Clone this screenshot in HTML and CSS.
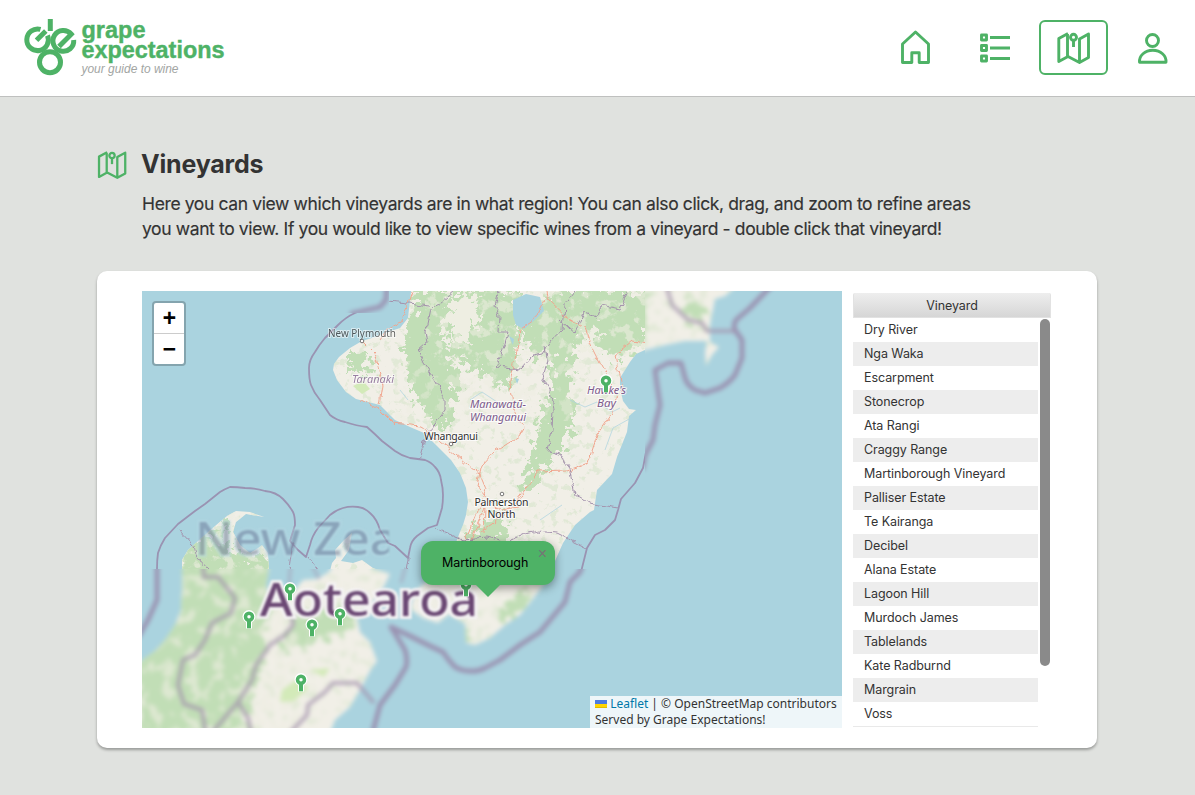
FILE: index.html
```html
<!DOCTYPE html>
<html lang="en">
<head>
<meta charset="utf-8">
<title>Grape Expectations</title>
<link rel="stylesheet" href="styles.css">
</head>
<body>
<svg class="defs" width="0" height="0" aria-hidden="true">
  <symbol id="map-icon" viewBox="0 0 34 34">
    <path d="M11.500 25.500 2.300 30.500V7.500L11.500 2.500M11 3v22.500M11.500 25.500 23 31.500l9-5V3L23 8v23"/>
    <circle cx="17" cy="6.300" r="3"/><path d="M17 9.500v6.500"/>
  </symbol>
  <symbol id="pin" viewBox="0 0 16 22">
    <path class="pin-halo" d="M8 7v12"/><circle class="pin-halo-dot" cx="8" cy="7" r="6.500"/>
    <path class="pin-stem" d="M8 8v10.700"/><circle class="pin-head" cx="8" cy="7.200" r="3.500"/>
  </symbol>
</svg>
<header class="topbar">
  <a class="logo">
    <svg width="204" height="60" viewBox="22 17 204 60">
      <g class="logo-mark">
        <path d="M40.500 29.400A10.800 10.800 0 1 0 47.500 35.500M45.800 31 36.500 40.300"/>
        <path d="M59 46.500 71.300 34.200A10.400 10.400 0 1 0 73.700 40"/>
        <circle cx="50" cy="62.200" r="10.500"/>
        <path d="M50.300 19v12"/>
      </g>
      <text class="logo-name" x="81.500" y="38" textLength="64" lengthAdjust="spacingAndGlyphs">grape</text>
      <text class="logo-name" x="81.500" y="58" textLength="143" lengthAdjust="spacingAndGlyphs">expectations</text>
      <text class="logo-tag" x="81.500" y="73" textLength="97" lengthAdjust="spacingAndGlyphs">your guide to wine</text>
    </svg>
  </a>
  <nav class="nav">
    <a class="nav-item"><svg width="34" height="36" viewBox="0.500 0.500 34 36"><path d="M4 33V14.500L17 2.500l13 12V33h-9.300V23.300h-7.400V33z"/></svg></a>
    <a class="nav-item"><svg width="34" height="34" viewBox="0 0 34 34"><path d="M3.500 4h5v5h-5zM3.500 14.500h5v5h-5zM3.500 25h5v5h-5zM12 6.500h20M12 17h20M12 27.500h20"/></svg></a>
    <a class="nav-item active"><svg width="34" height="34" viewBox="0.500 0 34 34"><use href="#map-icon" width="34" height="34"/></svg></a>
    <a class="nav-item"><svg width="34" height="34" viewBox="0.500 0 34 34"><circle cx="17" cy="9.500" r="6"/><path d="M4 31.200C3.500 24.500 9.500 19.300 17.300 19.300S31 24.500 30.500 31.200z"/></svg></a>
  </nav>
</header>
<main class="page">
  <section class="intro">
    <svg class="intro-icon" width="30" height="30"><use href="#map-icon"/></svg>
    <div>
      <h1>Vineyards</h1>
      <p class="lead">Here you can view which vineyards are in what region! You can also click, drag, and zoom to refine areas<br>you want to view. If you would like to view specific wines from a vineyard - double click that vineyard!</p>
    </div>
  </section>
  <section class="card">
    <div class="map">
      <svg class="map-canvas" width="700" height="437" viewBox="142 291 700 437">
        <defs>
          <filter id="ragged" x="-10%" y="-10%" width="120%" height="120%" color-interpolation-filters="sRGB"><feTurbulence type="fractalNoise" baseFrequency=".13" numOctaves="4" seed="4"/><feDisplacementMap in="SourceGraphic" scale="32" xChannelSelector="R" yChannelSelector="G"/></filter>
          <filter id="speckle" x="0" y="0" width="100%" height="100%" color-interpolation-filters="sRGB"><feTurbulence type="fractalNoise" baseFrequency=".12" numOctaves="4" seed="11"/><feColorMatrix values="0 0 0 0 .74  0 0 0 0 .86  0 0 0 0 .69  9 0 0 0 -5.200"/></filter>
          <filter id="clearing" x="0" y="0" width="100%" height="100%" color-interpolation-filters="sRGB"><feTurbulence type="fractalNoise" baseFrequency=".08" numOctaves="5" seed="23"/><feColorMatrix values="0 0 0 0 .93  0 0 0 0 .93  0 0 0 0 .88  8 0 0 0 -4.250"/></filter>
          <filter id="wobble" x="-5%" y="-5%" width="110%" height="110%" color-interpolation-filters="sRGB"><feTurbulence type="fractalNoise" baseFrequency=".12" numOctaves="2" seed="2"/><feDisplacementMap in="SourceGraphic" scale="7" xChannelSelector="R" yChannelSelector="G"/></filter>
          <filter id="soft" x="-10%" y="-10%" width="120%" height="120%" color-interpolation-filters="sRGB"><feGaussianBlur stdDeviation="1.900"/></filter>
          <filter id="soft-text" x="-10%" y="-20%" width="120%" height="140%" color-interpolation-filters="sRGB"><feGaussianBlur stdDeviation="1.300"/></filter>
          <clipPath id="fine"><path d="M142 313H389V291H645V569H142z"/></clipPath>
          <clipPath id="coarse"><path d="M142 291H389V313H142zM645 291H842V728H142V569H645z"/></clipPath>
          <clipPath id="ghost"><path d="M142 480H389V569H142z"/></clipPath>
          <clipPath id="land">
            <path id="north" d="M412 285L410 300 408 318 400 328 385 333 375 337 362 341 350 348 339 357 334 364 333 370 337 380 346 392 356 399 368 402 380 405 395 420 410 427 424 433 435 444 451 460 460 473 466 488 468 502 466 515 463 525 460 532 455 545 447 560 438 570 427 581 414 593 410 609 423 618 438 623 449 614 465 624 466 643 475 645 490 638 505 625 520 615 532 600 543 585 555 561 563 543 575 525 590 512 594 510 597 490 612 474 617 457 627 432 629 416 636 410 629 409 623 401 620 388 620 378 630 362 636 354 645 350 665 345 685 341 707 341 705 352 706 366 712 355 719 347 710 342 710 325 715 299 725 296 738 285z"/>
            <path id="south" d="M138 663L155 651 165 640 175 625 181 610 182 590 182 560 188 550 198 541 215 526 227 516 236 511 250 512 264 517 246 514 236 522 233 532 240 545 250 553 258 548 262 545 268 553 269 569 266 585 272 600 280 596 293 592 303 580 318 579 330 571 332 563 336 558 335 550 344 540 352 533 349 550 341 561 353 563 362 560 373 568 390 574 382 590 370 606 357 616 360 632 370 642 377 661 370 671 360 690 350 707 335 720 328 738H138z"/>
          </clipPath>
        </defs>
        <path class="sea" d="M142 291h700v437H142z"/>
        <g id="terrain">
          <use href="#north" class="ground"/><use href="#south" class="ground"/>
          <g clip-path="url(#land)">
            <rect x="142" y="285" width="600" height="450" filter="url(#speckle)" opacity=".3"/>
            <g class="forest" filter="url(#ragged)">
              <path d="M415 290h35l-6 50 14 36-6 42-12 12-26-34-12-50 8-26z"/>
              <path d="M449 290h70v70l-12 32-24-20-35-18z"/>
              <path d="M520 310l42-20h84v52l-22 18-45-20-40 20-16-26z"/>
              <path d="M551 340l26-4-8 44 5 40-16 38-10-6 2-55z"/>
              <path d="M545 400l8 2-3 55-16 34-14-2 12-34z"/>
              <path d="M470 530l30-16 10 20-22 28-24-2z"/>
              <path d="M350 350l16 2 6 22-12 4-10-10z"/>
              <path d="M180 552l50-35 15 40 25-3 3 34-10 74-20 60 20 10H138v-68l40-55z"/>
              <path d="M295 612l65-7-10 25-70 22z"/>
              <path d="M685 300h18v26l-12-4zM527 590l8 12-30 20-8-10zM465 620l10 20-10 6z"/>
            </g>
            <rect x="425" y="291" width="220" height="70" filter="url(#clearing)" opacity=".6"/>
            <rect x="395" y="361" width="190" height="60" filter="url(#clearing)" opacity=".4"/>
            <path class="bare" filter="url(#ragged)" d="M448 300l28-4 4 30-18 18-14-10zM590 325l12 8-6 20-14-4zM232 520l12 20-10 16-12-16z"/>
            <rect x="142" y="510" width="170" height="230" filter="url(#clearing)" opacity=".65"/>
            <path class="meadow" d="M282 690l14-10 13 8-15 13-14 1zM310 670l20-2-6 9zM353 386l10-5 7 8-8 5z"/>
          </g>
          <path class="water" d="M513 300l13-6 14 3 4 14-8 8-12 10-8-4-3-10zM509 336l5 3-1 6zM515 378l4 1-2 5z"/>
          <path class="stream" d="M570 400l15 7 12-5 15 10 8-4M605 450l8-22 18-10M400 390l8 10M470 400l12-8 15 10M540 520l22-15"/>
        </g>
        <g clip-path="url(#fine)" filter="url(#wobble)">
          <path class="road" d="M547 291l2 10 16 15 20 12 7 18 9 18 8 15 8 16-5 18-14 20-10 30-22 8-27 1-22 28-25 24-12 8M544 300l-10 20-14 10-3 20-7 32 4 30 10 15-6 10-22 14-14 15-5 20 10 13 14 11 18-3M396 425l-16-15-20-10M380 410l13 13 27 3 30 24 30 25 6 14-15 38-11 27M379 341l8-12 15-8 10-30M362 341l12 12 9 32-3 20M623 395l-8-40 17-14 18 3M471 540l14-32-1 25"/>
          <path class="region" d="M455 291l-14 12-9 5-3 15-4 9 2 12-8 7 5 12 11 16 9 17v16l-9 12-8 9-8 26M499 291l-4 14 4 10-1 17h10l-5 17-6 17 23 3 13-14 10-2 8-12 12-11 2-26 10-13M545 345l2 15-5 18 8 12 3 20-1 20-4 22 12 3 10 15 5 25 13 8 30 5M560 320l15 13 9-20 12 4 6-12 18 4 8-18M387 301l22 2 20 3M435 528l28 12 24-2 20 5 18-9 12-3 20 2 30 15M177 528l17 18 2 10 12 13M308 557l12 16M293 542l-4 27M408 558l-4 25"/>
        </g>
        <path class="maritime" clip-path="url(#fine)" d="M387 291L386 303Q384 308 380 307 365 308 355 313 346 317 338 325L325 338Q319 345 315 352 309 360 309 368 309 380 311 385 314 393 320 400L330 415Q336 420 345 422 357 426 367 427 375 434 382 441L395 451Q402 456 410 458 418 459 425 460 431 462 435 467 440 472 441 480 443 488 443 495 443 502 442 508L437 525 428 528 417 536Q411 541 410 548L408 558 395 546 388 543 380 530Q377 519 370 513 365 508 358 507 350 506 343 508 336 510 330 515L318 528Q312 536 310 545L306 557 298 550 290 541 295 525Q295 516 293 512 289 505 283 499 276 492 265 491 255 488 245 488 237 487 230 487 225 489 220 492L205 504 195 511 178 524 165 538Q160 546 158 553 157 560 157 569"/>
        <path class="maritime" clip-path="url(#fine)" d="M646 452L643 468 635 483 621 499 618 510 615 520 605 530 595 535 587 548 581 572"/>
        <g clip-path="url(#coarse)">
          <g filter="url(#soft)">
            <path class="sea" d="M135 285h715v450H135z"/>
            <use href="#terrain"/>
            <path class="maritime wide" d="M387 285L386 300 380 307 350 314M157 560V600L148 620 138 637M772 285L750 308 736 320Q733 325 735 330L742 340V358L735 375Q730 382 720 388L705 393 695 390Q687 385 685 378L681 363H668L655 370 657 385 660 405 655 425 653 440 645 455 642 470M584 560L580 572 570 582 565 602 550 620 540 632 520 645 500 660 485 668Q477 672 470 671 462 671 455 667 448 660 443 652L430 646 410 636 391 627 405 650Q408 660 406 667L395 685 380 705 372 735"/>
            <path class="region wide" d="M203 565l1 12 14 0 17 21-4 15-19 10-7 17-10 15-12 5-5 25 6 19 18 6 4 25M210 735l28-33 14-22 4-15 14-20 15-10 8-10-1-12M238 702l10 16 4 20M288 735l19-20 1-10 17-13 8-9h24l17 20M666 285l6 20 16 15 14 3 5 8h28"/>
            <path class="region mid" d="M408 558l-7 25M308 557l11 22M291 560l-2 25"/>
          </g>
        </g>
        <g class="country" filter="url(#soft-text)">
          <g clip-path="url(#ghost)"><text class="ghost" x="195" y="555" textLength="203" lengthAdjust="spacingAndGlyphs">New Zea</text></g>
          <text class="maori" x="260" y="616" textLength="218" lengthAdjust="spacingAndGlyphs">Aotearoa</text>
        </g>
        <g class="places">
          <text x="328" y="337" textLength="68" lengthAdjust="spacingAndGlyphs" opacity=".75">New Plymouth</text>
          <text x="424" y="440" textLength="54">Whanganui</text>
          <text x="474.500" y="506" textLength="54">Palmerston</text>
          <text x="487.500" y="518" textLength="28">North</text>
          <circle cx="362" cy="341" r="1.800"/><circle cx="451" cy="444" r="1.800"/><circle cx="502" cy="494" r="1.800"/>
        </g>
        <g class="areas">
          <text x="352" y="383" textLength="42" lengthAdjust="spacingAndGlyphs" opacity=".75">Taranaki</text>
          <text x="470" y="408" textLength="56" lengthAdjust="spacingAndGlyphs">Manawatū-</text>
          <text x="470" y="421" textLength="56" lengthAdjust="spacingAndGlyphs">Whanganui</text>
          <text x="587" y="394" textLength="39" lengthAdjust="spacingAndGlyphs">Hawke's</text>
          <text x="597" y="407" textLength="19" lengthAdjust="spacingAndGlyphs">Bay</text>
        </g>
        <use href="#pin" x="598" y="373.500" width="16" height="22"/>
        <use href="#pin" x="282" y="581.500" width="16" height="22"/>
        <use href="#pin" x="241" y="609.500" width="16" height="22"/>
        <use href="#pin" x="304" y="617.500" width="16" height="22"/>
        <use href="#pin" x="332" y="606.500" width="16" height="22"/>
        <use href="#pin" x="293" y="672.500" width="16" height="22"/>
        <use href="#pin" x="458" y="577.500" width="16" height="22"/>
      </svg>
      <div class="zoom"><button>+</button><button>−</button></div>
      <div class="popup"><span>Martinborough</span><i>×</i></div>
      <div class="attribution"><div class="credit"><svg width="12" height="8"><path fill="#4c7be1" d="M0 0h12v4H0z"/><path fill="#ffd500" d="M0 4h12v3H0z"/><path fill="#e0bc00" d="M0 7h12v1H0z"/></svg> <a>Leaflet</a> | © OpenStreetMap contributors</div><div class="served">Served by Grape Expectations!</div></div>
    </div>
    <div class="list">
      <div class="list-head">Vineyard</div>
      <div class="list-body">
        <ul>
          <li>Dry River</li><li>Nga Waka</li><li>Escarpment</li><li>Stonecrop</li><li>Ata Rangi</li><li>Craggy Range</li><li>Martinborough Vineyard</li><li>Palliser Estate</li><li>Te Kairanga</li><li>Decibel</li><li>Alana Estate</li><li>Lagoon Hill</li><li>Murdoch James</li><li>Tablelands</li><li>Kate Radburnd</li><li>Margrain</li><li>Voss</li>
        </ul>
        <div class="scrollbar"></div>
      </div>
    </div>
  </section>
</main>
</body>
</html>
```
FILE: styles.css
```css
* { box-sizing: border-box; }
body { margin: 0; height: 795px; overflow: hidden; background: #e0e2df; color: #333; font-family: Inter, "Liberation Sans", sans-serif; }
.defs { position: absolute; }
.topbar { height: 97px; background: #fff; border-bottom: 1px solid #bfc0bf; display: flex; justify-content: space-between; padding: 17px 8px 0 22px; }
.logo-mark { fill: none; stroke: #4eb266; stroke-width: 5; }
.logo-name { font: 700 23.500px "Liberation Sans", sans-serif; fill: #4eb266; stroke: #4eb266; stroke-width: .4; }
.logo-tag { font: italic 12.500px "Liberation Sans", sans-serif; fill: #a2a5a3; }
.nav { display: flex; gap: 10px; padding-top: 3px; }
.nav-item { width: 69px; height: 55px; display: flex; align-items: center; justify-content: center; border: 2px solid transparent; border-radius: 6px; }
.nav-item.active { border-color: #4eb266; }
.nav svg, .intro-icon { fill: none; stroke: #4eb266; stroke-width: 2.900; stroke-linejoin: round; }
.page { width: 1000px; margin-left: 97px; }
.intro { display: flex; gap: 15px; padding-top: 53px; height: 174px; }
.intro-icon { stroke-width: 2.600; flex: none; }
h1 { margin: -1px 0 0 -1px; font-size: 25px; line-height: 30px; letter-spacing: -.2px; color: #333; }
.lead { margin: 12px 0 0; font-size: 17.500px; font-weight: 400; line-height: 25px; white-space: nowrap; letter-spacing: -.375px; -webkit-text-stroke: .15px #333; }
.card { height: 477px; background: #fff; border-radius: 10px; padding: 20px 45px; display: flex; gap: 11px; box-shadow: 0 2px 3px rgba(0,0,0,.32); }
.map { width: 700px; height: 437px; position: relative; overflow: hidden; }
.map-canvas { display: block; }
.sea, .water { fill: #aad3df; }
.ground { fill: #f1efe7; }
.bare { fill: #eeeee2; }
.forest { fill: #c1deb6; }
.meadow { fill: #d3eab9; }
.stream { fill: none; stroke: #aad3df; stroke-width: .7; }
.road { fill: none; stroke: #f0a68f; stroke-width: 1; }
.region { fill: none; stroke: #a391ac; stroke-width: 1; }
.region.wide { stroke-width: 4; opacity: .7; }
.region.mid { stroke-width: 2.500; opacity: .6; }
.maritime { fill: none; stroke: #9a93b2; stroke-width: 1.800; stroke-linejoin: round; }
.maritime.wide { stroke-width: 4.800; }
.country text { font: 500 46px "Noto Sans", sans-serif; }
.country .ghost { fill: #6f7f9c; stroke: #b9dae6; stroke-width: 4; paint-order: stroke; opacity: .55; }
.country .maori { fill: #6b4874; stroke: #f4f2f3; stroke-width: 6; paint-order: stroke; }
.places text, .areas text { font: 10.500px "Noto Sans", sans-serif; fill: #2e2e2e; stroke: #fff; stroke-opacity: .75; stroke-width: 2; paint-order: stroke; }
.areas text { font-style: italic; fill: #7c5a8c; font-size: 11px; }
.places circle { fill: #fff; stroke: #555; stroke-width: .8; }
.pin-halo { stroke: #fff; stroke-width: 6; }
.pin-halo-dot { fill: #fff; }
.pin-stem { stroke: #4eb266; stroke-width: 4; }
.pin-head { fill: #fff; stroke: #4eb266; stroke-width: 3.500; }
.zoom { position: absolute; left: 10px; top: 10px; width: 34px; height: 65px; border: 2px solid rgba(0,0,0,.22); border-radius: 4px; background: #fff; background-clip: padding-box; }
.zoom button { display: block; width: 30px; height: 31px; padding: 2px 0 0 1px; border: 0; background: none; font: bold 23px/28px "Liberation Mono", monospace; color: #000; }
.zoom button:first-child { border-bottom: 1px solid #ccc; padding-top: 3px; }
.popup { position: absolute; left: 279px; top: 250px; width: 134px; height: 44px; border-radius: 12px; background: #4eb266; box-shadow: 0 3px 10px rgba(0,0,0,.4); font-size: 12.500px; font-weight: 400; line-height: 43px; color: #000; padding-left: 21px; letter-spacing: -.08px; }
.popup::after { content: ""; position: absolute; left: 54px; top: 43px; border: 13px solid transparent; border-top-color: #4eb266; border-bottom: 0; }
.popup i { position: absolute; right: 8px; top: 5px; font: 16px/16px "Liberation Sans", sans-serif; color: #757575; }
.attribution { position: absolute; right: 0; bottom: 0; width: 252px; height: 32px; background: rgba(255,255,255,.8); padding-left: 5px; font: 12px/16px "Noto Sans", sans-serif; white-space: nowrap; }
.attribution a { color: #0078a8; }
.list { width: 198px; padding-top: 2px; font-size: 12.500px; }
.list-head { height: 25px; line-height: 25px; text-align: center; background: linear-gradient(#eee, #d6d6d6); border: 1px solid #e2e2e2; border-top: 0; border-radius: 2px 2px 0 0; letter-spacing: -.1px; }
.list-body { display: flex; gap: 2px; }
ul { list-style: none; margin: 0; padding: 0; width: 185px; border-bottom: 1px solid #e9e9e9; }
li { height: 24px; line-height: 24px; padding-left: 11px; letter-spacing: -.08px; }
li:nth-child(even) { background: #ededed; }
.scrollbar { width: 10px; height: 347px; margin-top: 1px; border-radius: 5px; background: #8a8a8a; }
```
